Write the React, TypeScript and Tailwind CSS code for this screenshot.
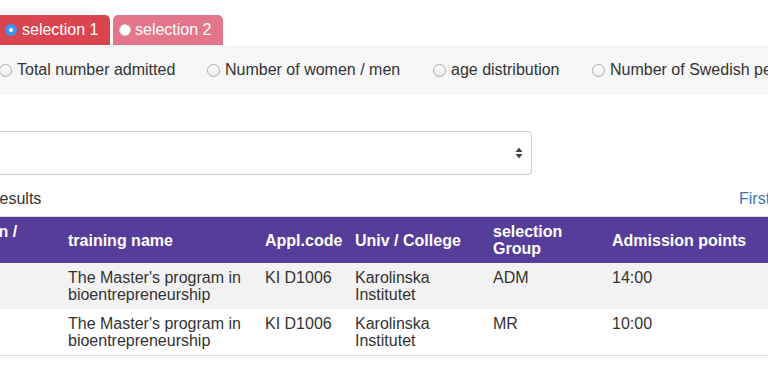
import React from 'react';

const rows = [
  { term: 'HT18', name: "The Master's program in bioentrepreneurship", code: 'KI D1006', univ: 'Karolinska Institutet', group: 'ADM', points: '14:00' },
  { term: 'HT18', name: "The Master's program in bioentrepreneurship", code: 'KI D1006', univ: 'Karolinska Institutet', group: 'MR', points: '10:00' },
];

const options = [
  { label: 'Total number admitted', w: 'w-[208px]' },
  { label: 'Number of women / men', w: 'w-[226px]' },
  { label: 'age distribution', w: 'w-[159px]' },
  { label: 'Number of Swedish persons', w: 'w-[260px]' },
];

function Radio() {
  return (
    <span className="inline-block w-[13px] h-[13px] shrink-0 rounded-full border border-[#a9a9a9] bg-gradient-to-b from-white to-[#ececec]" />
  );
}

export default function App() {
  return (
    <div className="w-[768px] h-[368px] overflow-hidden bg-white text-[#333] text-[16px] font-['Liberation_Sans',Arial,sans-serif]">
      {/* Selection tabs */}
      <div className="flex gap-[3px] pt-[15px]">
        <div className="flex items-center gap-[5px] w-[110px] h-[30px] pl-[5px] rounded-tr-[5px] bg-[#d9444f] text-white">
          <span className="flex items-center justify-center w-[12px] h-[12px] rounded-full bg-[#3d95f5]">
            <span className="w-[4px] h-[4px] rounded-full bg-white" />
          </span>
          <span>selection 1</span>
        </div>
        <div className="flex items-center gap-[4px] w-[110px] h-[30px] pl-[6px] rounded-t-[5px] bg-[#e3768a] text-white">
          <span className="w-[12px] h-[12px] rounded-full bg-white border border-[#d0d0d0]" />
          <span>selection 2</span>
        </div>
      </div>

      {/* Statistic choice */}
      <div className="flex items-center h-[50px] bg-[#f7f7f7] whitespace-nowrap">
        <div className="flex -ml-[1px]">
          {options.map((o) => (
            <label key={o.label} className={`flex items-center gap-[5px] shrink-0 ${o.w}`}>
              <Radio />
              <span>{o.label}</span>
            </label>
          ))}
        </div>
      </div>

      <div className="-ml-[77px] w-[1020px]">
        {/* Select */}
        <div className="mt-[36px] flex items-center justify-end w-[609px] h-[44px] pr-[8px] border border-[#cccccc] rounded-[4px] bg-white">
          <svg width="8" height="12" viewBox="0 0 8 12">
            <path d="M4 0.5 L7.5 5 L0.5 5 Z" fill="#444" />
            <path d="M0.5 7 L7.5 7 L4 11.5 Z" fill="#444" />
          </svg>
        </div>

        {/* Results + pager */}
        <div className="flex items-center h-[20px] mt-[14px] whitespace-nowrap">
          <span className="w-[816px] pl-[65px]">Results</span>
          <span className="text-[#337ab7]">First</span>
          <span className="ml-[12px] text-[#337ab7]">Previous</span>
        </div>

        {/* Table */}
        <table className="mt-[7px] w-full table-fixed border-collapse border-t border-b border-[#dddddd] leading-[17px]">
          <colgroup>
            <col className="w-[137px]" />
            <col className="w-[197px]" />
            <col className="w-[90px]" />
            <col className="w-[138px]" />
            <col className="w-[119px]" />
            <col />
          </colgroup>
          <thead>
            <tr className="bg-[#563d9a] text-white font-bold text-left">
              <th className="px-[8px] py-[6px] align-middle">Education /<br />term</th>
              <th className="px-[8px] py-[6px] align-middle">training name</th>
              <th className="px-[8px] py-[6px] align-middle">Appl.code</th>
              <th className="px-[8px] py-[6px] align-middle">Univ / College</th>
              <th className="px-[8px] py-[6px] align-middle">selection<br />Group</th>
              <th className="px-[8px] py-[6px] align-middle">Admission points</th>
            </tr>
          </thead>
          <tbody>
            {rows.map((r, i) => (
              <tr key={i} className={i % 2 === 0 ? 'bg-[#f2f2f2]' : 'bg-white'}>
                <td className="px-[8px] py-[6px] align-top">{r.term}</td>
                <td className="px-[8px] py-[6px] align-top">The Master's program in<br />bioentrepreneurship</td>
                <td className="px-[8px] py-[6px] align-top">{r.code}</td>
                <td className="px-[8px] py-[6px] align-top">Karolinska<br />Institutet</td>
                <td className="px-[8px] py-[6px] align-top">{r.group}</td>
                <td className="px-[8px] py-[6px] align-top">{r.points}</td>
              </tr>
            ))}
          </tbody>
        </table>
      </div>
    </div>
  );
}
